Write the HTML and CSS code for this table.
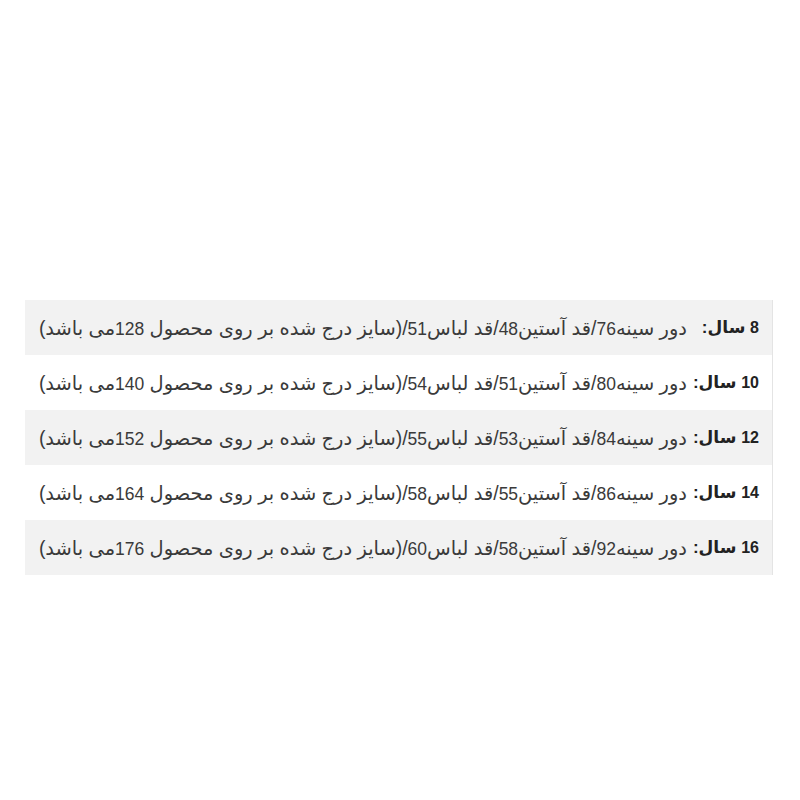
FILE: index.html
```html
<!DOCTYPE html>
<html lang="fa" dir="rtl">
<head>
<meta charset="utf-8">
<link rel="stylesheet" href="styles.css">
</head>
<body>
<div class="page">
  <div class="table">
    <div class="row alt"><div class="label"><span class="num">8</span> سال:</div><div class="value">دور سینه<span class="num">76</span>/قد آستین<span class="num">48</span>/قد لباس<span class="num">51</span>/(سایز درج شده بر روی محصول <span class="num">128</span>می باشد)</div></div>
    <div class="row"><div class="label"><span class="num">10</span> سال:</div><div class="value">دور سینه<span class="num">80</span>/قد آستین<span class="num">51</span>/قد لباس<span class="num">54</span>/(سایز درج شده بر روی محصول <span class="num">140</span>می باشد)</div></div>
    <div class="row alt"><div class="label"><span class="num">12</span> سال:</div><div class="value">دور سینه<span class="num">84</span>/قد آستین<span class="num">53</span>/قد لباس<span class="num">55</span>/(سایز درج شده بر روی محصول <span class="num">152</span>می باشد)</div></div>
    <div class="row"><div class="label"><span class="num">14</span> سال:</div><div class="value">دور سینه<span class="num">86</span>/قد آستین<span class="num">55</span>/قد لباس<span class="num">58</span>/(سایز درج شده بر روی محصول <span class="num">164</span>می باشد)</div></div>
    <div class="row alt"><div class="label"><span class="num">16</span> سال:</div><div class="value">دور سینه<span class="num">92</span>/قد آستین<span class="num">58</span>/قد لباس<span class="num">60</span>/(سایز درج شده بر روی محصول <span class="num">176</span>می باشد)</div></div>
  </div>
</div>
</body>
</html>
```
FILE: styles.css
```css
html, body {
  margin: 0;
  padding: 0;
  background: #ffffff;
}
body {
  font-family: "Liberation Sans", "DejaVu Sans", sans-serif;
  font-size: 16px;
  color: #333333;
}
.page {
  width: 800px;
  height: 800px;
  padding-top: 300px;
  box-sizing: border-box;
}
.table {
  margin-right: 27px;
  margin-left: 25px;
  border-right: 1px solid #e4e4e4;
}
.row {
  display: flex;
  align-items: center;
  height: 55px;
  background: #ffffff;
}
.row.alt {
  background: #f2f2f2;
}
.label {
  width: 64px;
  padding-right: 13px;
  padding-left: 8px;
  font-size: 17px;
  font-weight: bold;
  color: #222222;
  white-space: nowrap;
}
.label .num {
  font-size: 16px;
}
.value {
  flex: 1;
  white-space: nowrap;
  font-size: 19.4px;
  color: #3a3a3a;
  padding-top: 1px;
}
.value .num {
  font-size: 17.5px;
}
```
